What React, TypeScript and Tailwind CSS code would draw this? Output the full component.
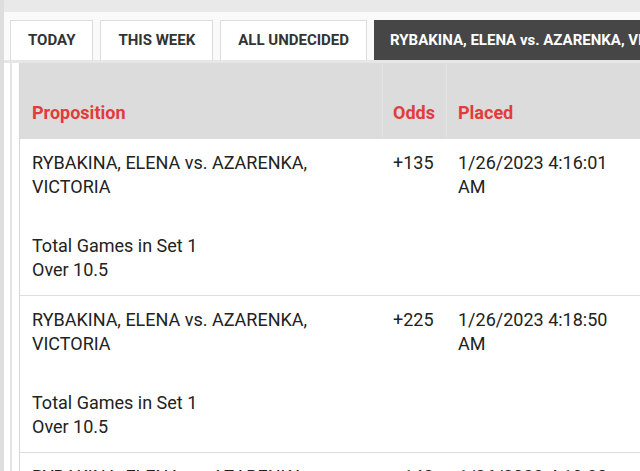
const FONT = "font-['Roboto','Liberation_Sans',sans-serif]"

// ---------------------------------------------------------------------------
// Data
// ---------------------------------------------------------------------------
interface Wager {
  event: string
  market: string
  pick: string
  odds: string
  placed: string
}

const WAGERS: Wager[] = [
  {
    event: 'RYBAKINA, ELENA vs. AZARENKA, VICTORIA',
    market: 'Total Games in Set 1',
    pick: 'Over 10.5',
    odds: '+135',
    placed: '1/26/2023 4:16:01 AM',
  },
  {
    event: 'RYBAKINA, ELENA vs. AZARENKA, VICTORIA',
    market: 'Total Games in Set 1',
    pick: 'Over 10.5',
    odds: '+225',
    placed: '1/26/2023 4:18:50 AM',
  },
  {
    event: 'RYBAKINA, ELENA vs. AZARENKA, VICTORIA',
    market: 'Total Games in Set 1',
    pick: 'Over 10.5',
    odds: '+140',
    placed: '1/26/2023 4:19:30 AM',
  },
]

const TABS = ['TODAY', 'THIS WEEK', 'ALL UNDECIDED']

// ---------------------------------------------------------------------------
// Row
// ---------------------------------------------------------------------------
function WagerRow({ w }: { w: Wager }) {
  return (
    <div className="grid grid-cols-[362px_64px_minmax(0,1fr)] border-b border-[#dddddd] bg-white text-[18px] leading-[24px] text-[#222222]">
      <div className="pl-[12px] pr-[30px] pt-[12px] pb-[13px]">
        <div>{w.event}</div>
        <div className="mt-[35px]">{w.market}</div>
        <div>{w.pick}</div>
      </div>
      <div className="pl-[11px] pt-[12px]">{w.odds}</div>
      <div className="pl-[12px] pt-[12px]">
        <div className="w-[165px]">{w.placed}</div>
      </div>
    </div>
  )
}

export default function App() {
  return (
    <div className={`${FONT} flex h-[471px] w-[640px] overflow-hidden bg-white`}>
      {/* left edge strip */}
      <div className="w-[4px] shrink-0 bg-[#dedede]" />

      <div className="flex min-w-0 flex-1 flex-col">
        {/* top band */}
        <div className="h-[12px] shrink-0 bg-[#e9e9e9]" />
        <div className="h-[8px] shrink-0 bg-[#fafafa]" />

        {/* tabs */}
        <div className="flex h-[40px] shrink-0 gap-[7px] bg-[#fafafa] pl-[6px]">
          {TABS.map((t) => (
            <div
              key={t}
              className="flex shrink-0 items-center border border-b-0 border-[#dcdcdc] bg-white px-[17px] text-[15px] font-bold text-[#333333]"
            >
              {t}
            </div>
          ))}
          <div className="flex shrink-0 items-center whitespace-nowrap bg-[#464646] px-[16px] text-[15px] font-bold text-white">
            RYBAKINA, ELENA vs. AZARENKA, VICTORIA
          </div>
        </div>
        <div className="h-[3px] shrink-0 bg-[#e6e6e6]" />

        {/* content */}
        <div className="ml-[6px] flex-1 border-l-2 border-[#e4e4e4] pl-[7px]">
          <div className="border-l border-[#d6d6d6]">
            {/* header */}
            <div className="grid h-[76px] grid-cols-[362px_64px_minmax(0,1fr)] bg-[#dcdcdc] text-[18px] font-bold leading-[24px] text-[#e23b3b]">
              <div className="flex items-end pb-[14px] pl-[12px]">Proposition</div>
              <div className="flex items-end border-l border-[#e3e3e3] pb-[14px] pl-[10px]">Odds</div>
              <div className="flex items-end border-l border-[#e3e3e3] pb-[14px] pl-[11px]">Placed</div>
            </div>
            {WAGERS.map((w, i) => (
              <WagerRow key={i} w={w} />
            ))}
          </div>
        </div>
      </div>
    </div>
  )
}
